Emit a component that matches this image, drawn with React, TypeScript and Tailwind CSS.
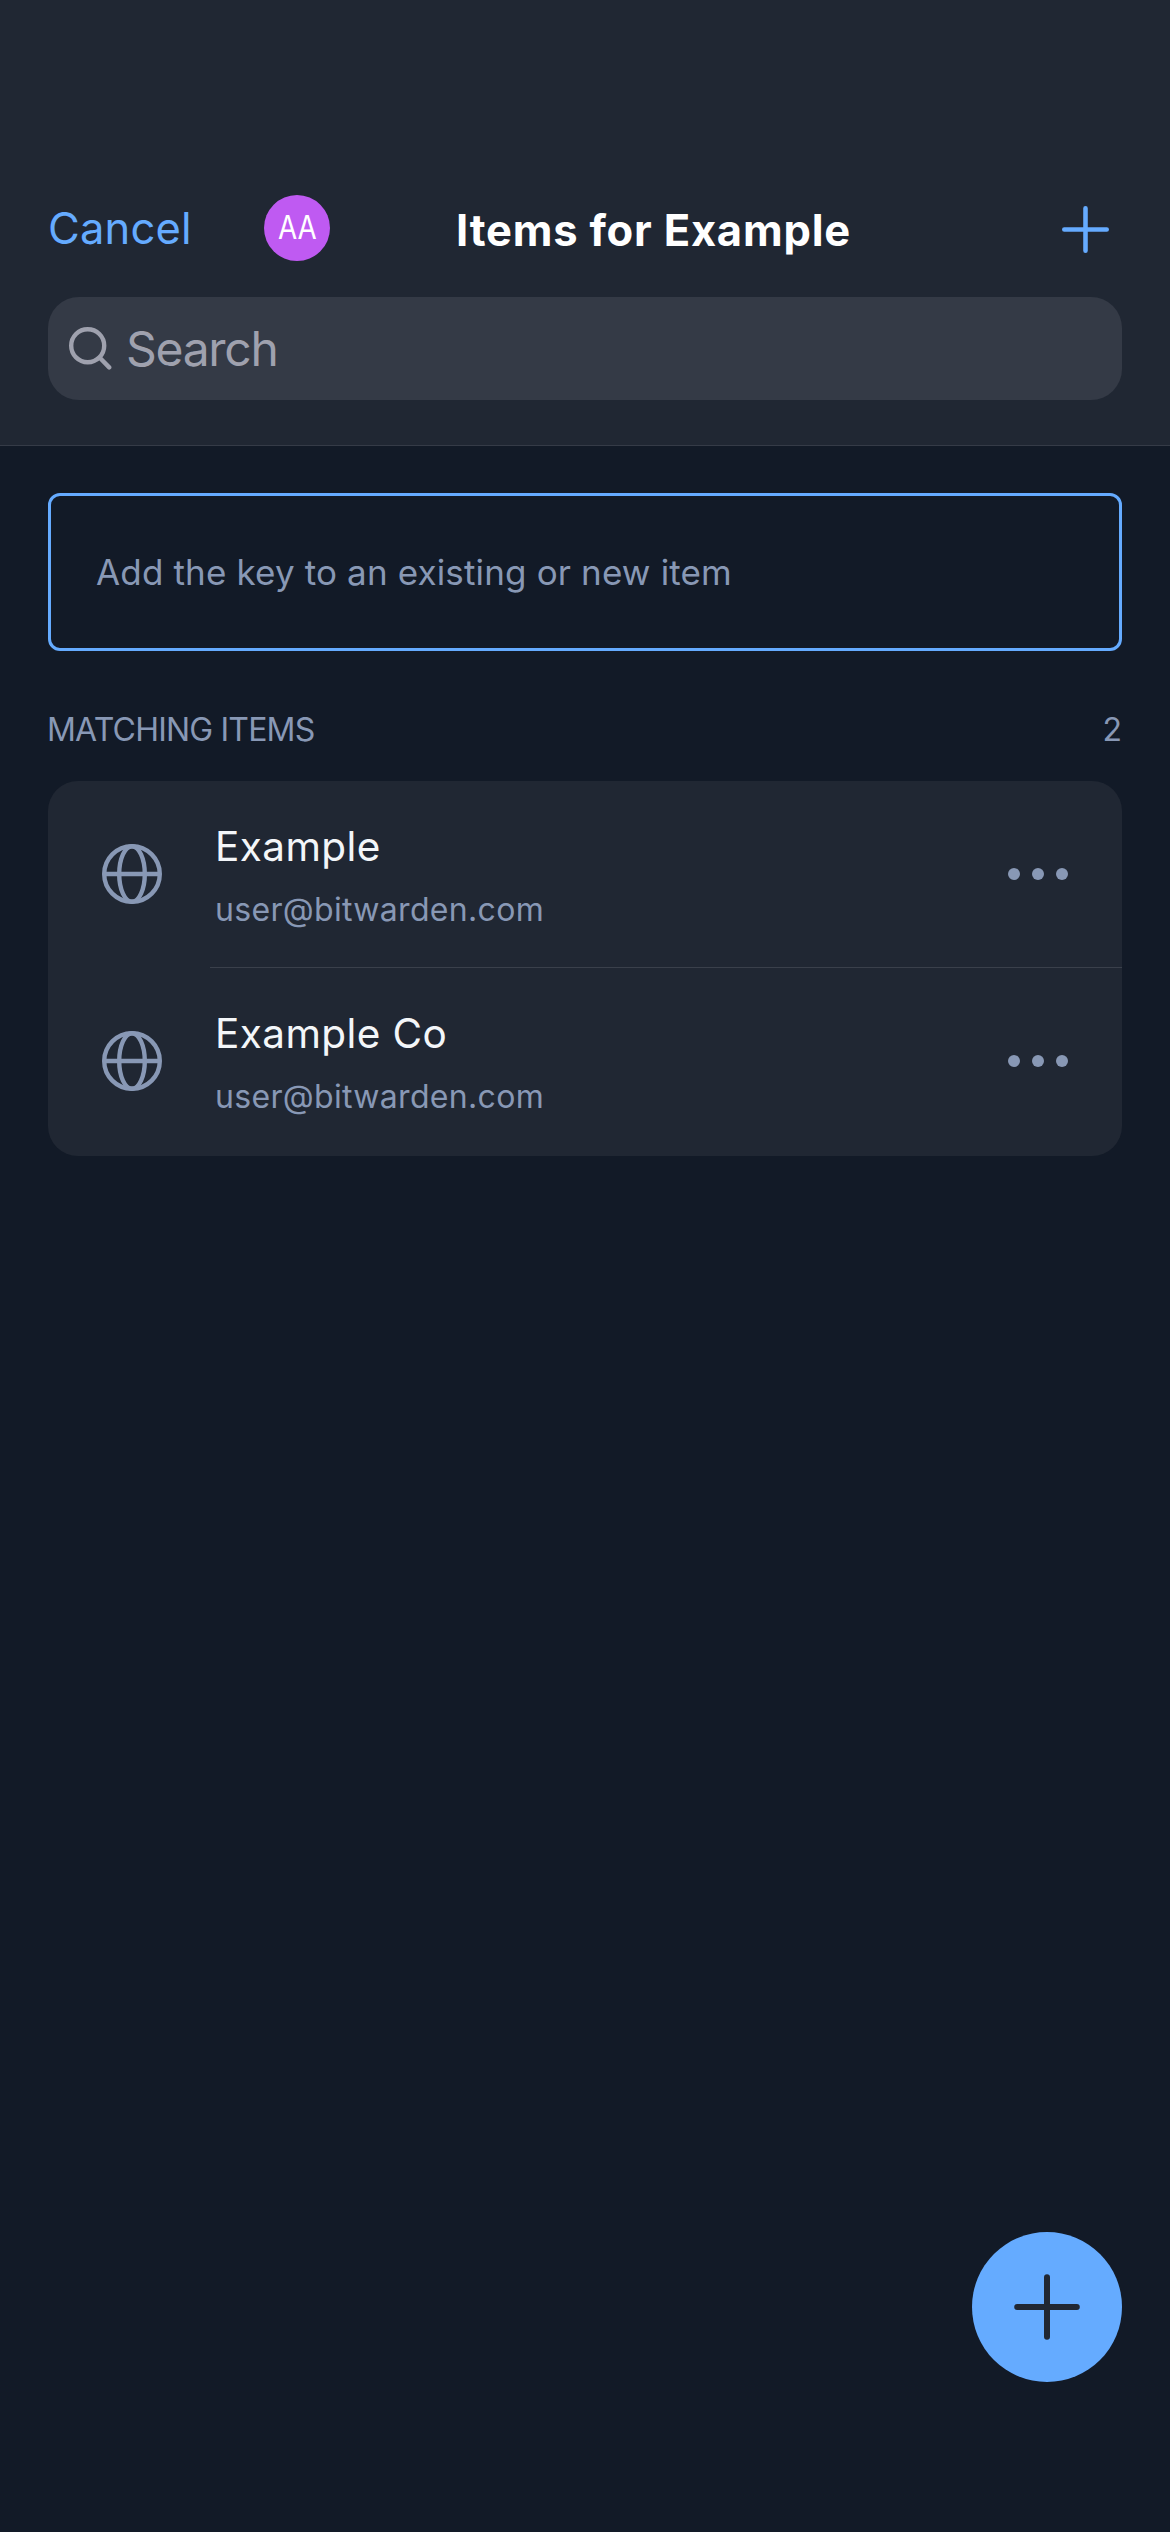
import React from 'react';

function PlusIcon({ className, width }: { className: string; width: number }) {
  return (
    <svg viewBox="0 0 66 66" className={className} fill="none" stroke="currentColor" strokeWidth={width} strokeLinecap="round">
      <path d="M33 3.2V62.8M3.2 33H62.8" />
    </svg>
  );
}

function SearchIcon() {
  return (
    <svg viewBox="0 0 44 44" className="mb-[2px] size-[44px] shrink-0" fill="none" stroke="currentColor" strokeWidth="4.4" strokeLinecap="round">
      <circle cx="19.7" cy="19.7" r="16.5" />
      <path d="M31.8 31.8L41.2 41.4" />
    </svg>
  );
}

function GlobeIcon() {
  return (
    <svg viewBox="0 0 60 60" className="size-[60px] shrink-0 text-[#8898b5]" fill="none" stroke="currentColor" strokeWidth="4.4">
      <circle cx="30" cy="30" r="27.8" />
      <ellipse cx="30" cy="30" rx="12.8" ry="27.8" />
      <path d="M2 30H58" />
    </svg>
  );
}

function Dots() {
  return (
    <div className="flex gap-3">
      <span className="size-3 rounded-full bg-[#8898b5]" />
      <span className="size-3 rounded-full bg-[#8898b5]" />
      <span className="size-3 rounded-full bg-[#8898b5]" />
    </div>
  );
}

function Item({ name, user }: { name: string; user: string }) {
  return (
    <li className="group flex h-[187px]">
      <div className="flex h-[186px] w-[162px] shrink-0 items-center pl-[54px]">
        <GlobeIcon />
      </div>
      <div className="flex grow justify-between border-b border-[#3a404b] pr-[54px] group-last:border-transparent">
        <div className="pt-[34px] pl-[5px] font-[370]">
          <p className="text-[40.5px] leading-[63px] tracking-[0.4px] text-[#f3f6f9]">{name}</p>
          <p className="text-[32px] leading-[63px] tracking-[0.32px] text-[#8898b5]">{user}</p>
        </div>
        <div className="flex h-[186px] items-center">
          <Dots />
        </div>
      </div>
    </li>
  );
}

export default function App() {
  return (
    <div className="relative h-[2532px] w-[1170px] overflow-hidden bg-[#121a27] font-['Inter',sans-serif]">
      <header className="h-[446px] border-b border-[#353b47] bg-[#202733] px-12 pt-[195px]">
        <div className="flex h-[66px] items-center">
          <button className="w-[216px] text-left text-[43.5px] leading-[66px] font-[370] tracking-[0.2px] text-[#65abff]">Cancel</button>
          <div className="flex size-[66px] items-center justify-center rounded-full bg-[#bf5af2]">
            <span className="scale-x-[0.87] text-[32px] leading-none font-[370] text-white">AA</span>
          </div>
          <h1 className="mt-[4px] ml-[126px] text-[43.5px] leading-[66px] font-bold tracking-[0.8px] whitespace-nowrap text-white">
            Items for Example
          </h1>
          <PlusIcon className="mt-[2px] mr-[13px] ml-auto size-[47px] text-[#65abff]" width={6.4} />
        </div>
        <div className="mt-9 flex h-[103px] items-center rounded-[31px] bg-[#343a46] pl-[20px] text-[#9fa1ae]">
          <SearchIcon />
          <span className="pl-[14px] text-[48px] leading-[103px] font-[390] tracking-[-1.3px]">Search</span>
        </div>
      </header>
      <main className="px-12 pt-[47px]">
        <div className="flex h-[158px] items-center rounded-xl border-3 border-[#65abff] pl-[45px] text-[35px] font-[370] tracking-[0.15px] text-[#8898b5]">
          Add the key to an existing or new item
        </div>
        <div className="flex h-[130px] items-center justify-between pt-[27px] text-[32px] font-[370] text-[#8898b5]">
          <h2 className="-ml-px tracking-[-0.8px]">MATCHING ITEMS</h2>
          <span>2</span>
        </div>
        <ul className="rounded-[30px] bg-[#202733] pb-px">
          <Item name="Example" user="user@bitwarden.com" />
          <Item name="Example Co" user="user@bitwarden.com" />
        </ul>
      </main>
      <button className="absolute right-12 bottom-[150px] flex size-[150px] items-center justify-center rounded-full bg-[#65abff] text-[#202733]">
        <PlusIcon className="size-[66px]" width={6} />
      </button>
    </div>
  );
}
